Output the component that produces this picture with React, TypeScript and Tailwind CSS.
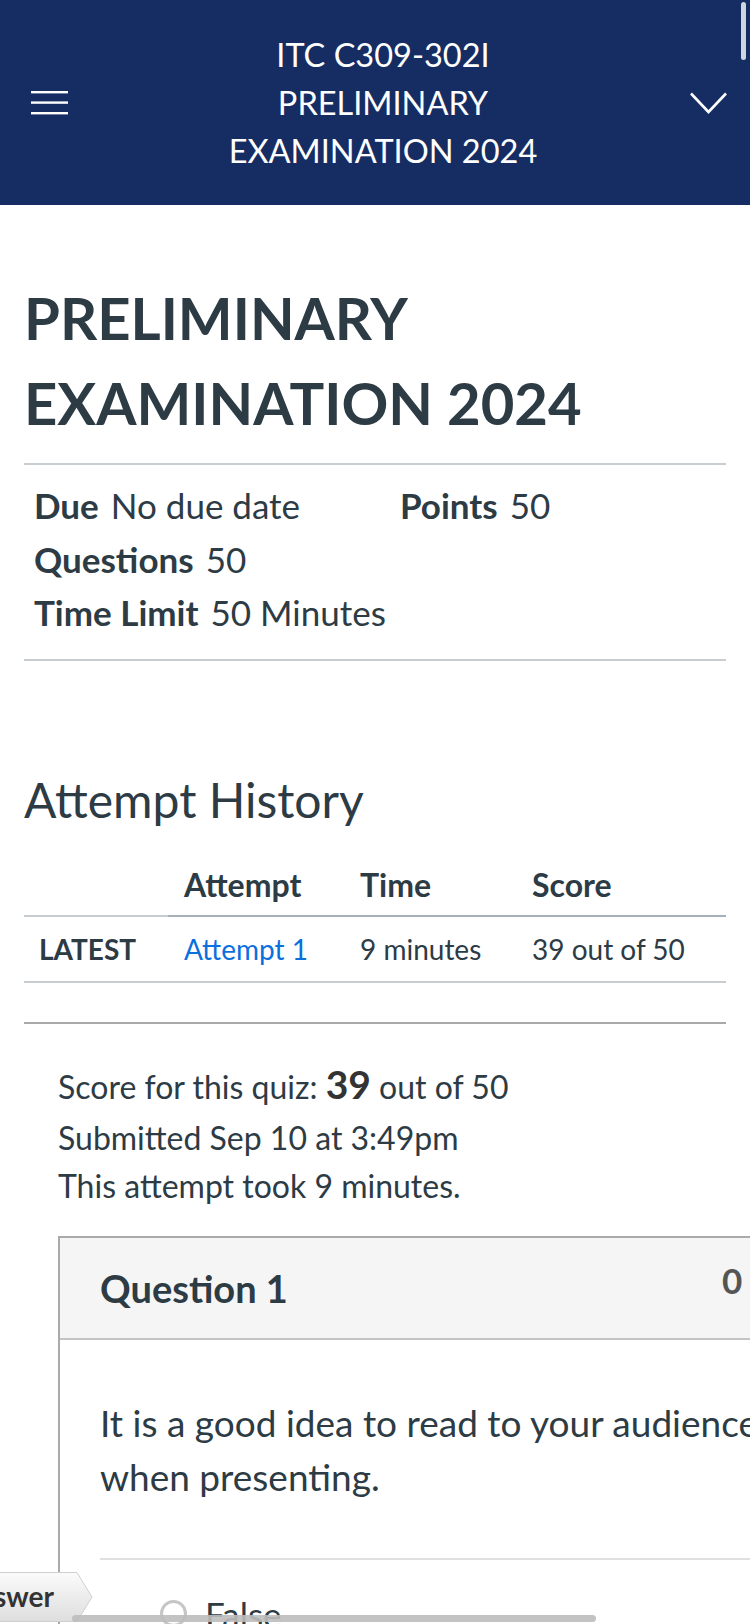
import React from "react";

function Hamburger() {
  return (
    <svg width="38" height="24" viewBox="0 0 38 24" className="block">
      <rect x="0" y="0" width="37" height="2.4" fill="#fff" />
      <rect x="0" y="10.4" width="37" height="2.4" fill="#fff" />
      <rect x="0" y="21" width="37" height="2.4" fill="#fff" />
    </svg>
  );
}

function Chevron() {
  return (
    <svg width="37" height="22" viewBox="0 0 37 22" className="block">
      <polyline points="1,1.5 18.5,20 36,1.5" fill="none" stroke="#fff" strokeWidth="2.6" />
    </svg>
  );
}

function InfoItem({ label, value, wide }: { label: string; value: string; wide?: boolean }) {
  return (
    <div className={wide ? "w-[366px] shrink-0" : ""}>
      <span className="font-bold mr-[12px]">{label}</span>
      <span>{value}</span>
    </div>
  );
}

export default function App() {
  return (
    <div className="relative w-[750px] h-[1624px] overflow-hidden bg-white text-[#2d3b45] [font-family:Lato,'Noto_Sans',sans-serif]">
      {/* top bar */}
      <header className="grid grid-cols-[100px_1fr_84px] items-center h-[205px] bg-[#162d63] text-white">
        <div className="pl-[31px]">
          <Hamburger />
        </div>
        <div className="w-[340px] mx-auto text-center text-[32.5px] leading-[48px]">
          ITC C309-302I PRELIMINARY EXAMINATION 2024
        </div>
        <div className="flex justify-end pr-[23px]">
          <Chevron />
        </div>
      </header>

      <main className="px-[24px]">
        <h1 className="mt-[70px] text-[58px] leading-[85px] font-bold">PRELIMINARY EXAMINATION 2024</h1>

        <div className="mt-[18px] border-t-2 border-[#c7cdd1]" />
        <div className="pl-[10px] pt-[14px] pb-[19px] text-[35px] leading-[53.5px]">
          <div className="flex">
            <InfoItem label="Due" value="No due date" wide />
            <InfoItem label="Points" value="50" />
          </div>
          <InfoItem label="Questions" value="50" />
          <InfoItem label="Time Limit" value="50 Minutes" />
        </div>
        <div className="border-t-2 border-[#c7cdd1]" />

        <h2 className="mt-[109px] text-[48px] leading-[60px] font-normal">Attempt History</h2>

        <div className="mt-[26px] grid grid-cols-[144px_176px_172px_210px]">
          <div className="h-[61px] border-b-2 border-[#c7cdd1]" />
          <div className="h-[61px] border-b-2 border-[#a5b0b8] flex items-center pl-[16px] text-[32px] font-bold">Attempt</div>
          <div className="h-[61px] border-b-2 border-[#a5b0b8] flex items-center pl-[16px] text-[32px] font-bold">Time</div>
          <div className="h-[61px] border-b-2 border-[#a5b0b8] flex items-center pl-[16px] text-[32px] font-bold">Score</div>

          <div className="h-[66px] border-b-2 border-[#c7cdd1] flex items-center pl-[15px] text-[28px] font-bold">LATEST</div>
          <div className="h-[66px] border-b-2 border-[#c7cdd1] flex items-center pl-[16px] text-[28px] text-[#0b6fde]">Attempt 1</div>
          <div className="h-[66px] border-b-2 border-[#c7cdd1] flex items-center pl-[16px] text-[28px]">9 minutes</div>
          <div className="h-[66px] border-b-2 border-[#c7cdd1] flex items-center pl-[16px] text-[28px]">39 out of 50</div>
        </div>

        <div className="mt-[39px] border-t-2 border-[#a9a9a9]" />

        <div className="pl-[34px] pt-[36px] text-[32px] leading-[48px]">
          <div className="mb-[3px]">
            Score for this quiz: <span className="text-[39px] font-bold text-[#333]">39</span> out of 50
          </div>
          <div>Submitted Sep 10 at 3:49pm</div>
          <div>This attempt took 9 minutes.</div>
        </div>

        <section className="ml-[34px] mt-[26px] w-[790px] border-t-2 border-l-2 border-[#aaaaaa]">
          <div className="flex h-[102px] bg-[#f5f5f5] border-b-2 border-[#c4c4c4] pl-[40px]">
            <div className="w-[622px] shrink-0 pt-[23px] text-[38px] leading-[54px] font-bold">Question 1</div>
            <div className="shrink-0 pt-[16px] text-[35px] leading-[52px] font-bold text-[#555] whitespace-nowrap">
              0<span className="ml-[16px]">/ 1 pts</span>
            </div>
          </div>
          <div className="px-[40px] pt-[56px]">
            <p className="text-[37px] leading-[54px]">It is a good idea to read to your audience when presenting.</p>
            <div className="mt-[54px] border-t-2 border-[#e0e0e0]" />
            <div className="flex items-center gap-[18px] pl-[60px] pt-[34px]">
              <span className="w-[27px] h-[27px] rounded-full border-[3px] border-[#c6c6c6] shrink-0" />
              <span className="text-[35px] leading-[40px]">False</span>
            </div>
          </div>
        </section>
      </main>

      {/* answer tag, cut off at the left edge */}
      <div className="absolute left-0 top-[1572px] w-[93px] h-[50px]">
        <svg width="93" height="50" viewBox="0 0 93 50" className="absolute inset-0">
          <defs>
            <linearGradient id="tag" x1="0" y1="0" x2="0" y2="1">
              <stop offset="0" stopColor="#fbfbfb" />
              <stop offset="1" stopColor="#dedede" />
            </linearGradient>
          </defs>
          <polygon points="-2,0.5 77,0.5 92,25 77,49.5 -2,49.5" fill="url(#tag)" stroke="#cfcfcf" strokeWidth="1" />
        </svg>
        <div className="absolute right-[39px] top-[7px] text-[28px] leading-[34px] font-bold text-[#333] whitespace-nowrap">Correct Answer</div>
      </div>

      {/* browser scroll indicators */}
      <div className="absolute left-[72px] top-[1615px] w-[524px] h-[7px] rounded-full bg-[#bdbdbd]/90" />
      <div className="absolute left-[741px] top-[2px] w-[5px] h-[58px] rounded-full bg-[#d0d4dc]" />
    </div>
  );
}
